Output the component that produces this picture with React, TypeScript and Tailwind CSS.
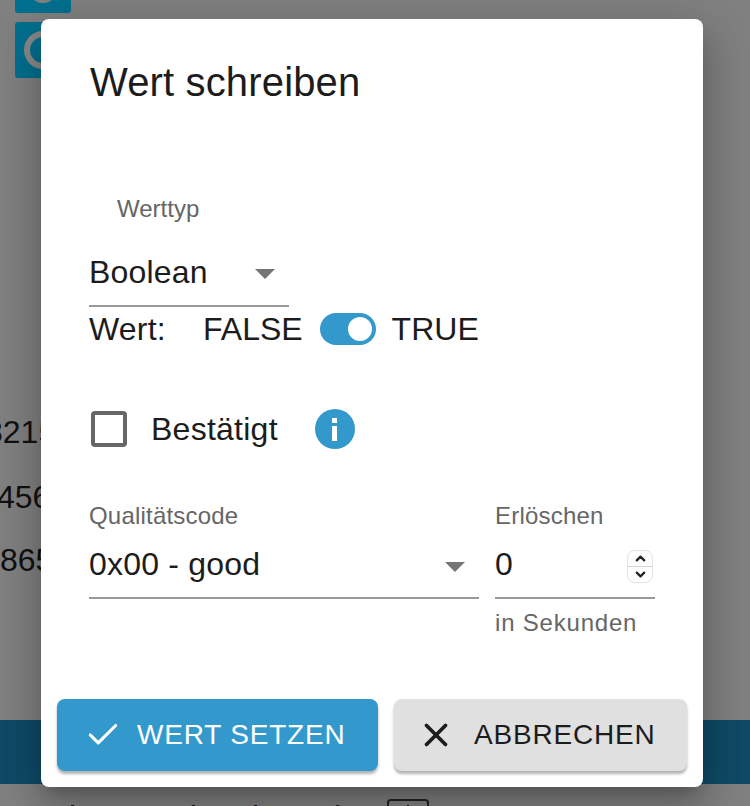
import React from 'react';
import { Check, X, ChevronUp, ChevronDown } from 'lucide-react';

const font = "font-['Liberation_Sans',Arial,sans-serif]";

function Caret() {
  return <div className="w-0 h-0 border-x-[10px] border-x-transparent border-t-[10px] border-t-[#757575]" />;
}

function Background() {
  return (
    <div className="h-[806px] overflow-hidden bg-[#808080]">
      <div className="flex flex-col gap-[9px] pl-[15px] -mt-[43px]">
        <div className="w-[56px] h-[56px] rounded-[3px] bg-[#00708f] flex items-end justify-center pb-[10px]">
          <div className="w-[22px] h-[9px] rounded-b-full bg-[#808080]" />
        </div>
        <div className="w-[56px] h-[56px] rounded-[3px] bg-[#00708f] flex items-center pl-[9px]">
          <div className="w-[38px] h-[38px] rounded-full border-[6px] border-[#8a8a8a]" />
        </div>
      </div>
      <div className="mt-[338px] flex flex-col text-[32px] leading-[33px] text-[#111] whitespace-nowrap">
        <div className="-ml-[15px]">8215</div>
        <div className="-ml-[3px] mt-[32px]">456</div>
        <div className="mt-[30px]">865</div>
      </div>
      <div className="mt-[143px] h-[64px] bg-[#0f4a66]" />
      <div className="mt-[15px] flex items-start text-[32px] leading-[36px] text-[#111] whitespace-nowrap">
        <span className="w-[391px] -ml-[4px] shrink-0">407Zimmer Uhrzeit 1: Bl</span>
        <div className="w-[42px] h-[20px] rounded-[4px] border-2 border-[#222] flex justify-center">
          <div className="w-[2px] h-[16px] bg-[#222] mt-[4px]" />
        </div>
      </div>
    </div>
  );
}

export default function App() {
  return (
    <div className={`relative h-[806px] w-[750px] overflow-hidden ${font}`}>
      <Background />
      <div className="absolute left-[41px] top-[19px] w-[662px] h-[768px] rounded-[8px] bg-white text-[#1c1c1c] shadow-[0_11px_15px_-7px_rgba(0,0,0,0.2),0_24px_38px_3px_rgba(0,0,0,0.14),0_9px_46px_8px_rgba(0,0,0,0.12)] flex flex-col">
        <h2 className="pl-[49px] pt-[40px] text-[40px] leading-[46px] tracking-[0.15px]">Wert schreiben</h2>

        <div className="pl-[48px] pr-[48px] mt-[92px]">
          <div className="pl-[28px] text-[24px] leading-[24px] text-[#666]">Werttyp</div>
          <div className="mt-[31px] w-[200px] h-[55px] border-b-2 border-[#999] flex items-start justify-between pr-[14px]">
            <span className="text-[32px] leading-[40px] tracking-[0.2px]">Boolean</span>
            <div className="mt-[17px]"><Caret /></div>
          </div>
          <div className="mt-[2px] flex items-center text-[32px] leading-[40px]">
            <span className="w-[114px] tracking-[0.2px]">Wert:</span>
            <span>FALSE</span>
            <div className="ml-[17px] mr-[16px] w-[56px] h-[32px] rounded-full bg-[#3399cc] flex items-center justify-end pr-[4px]">
              <div className="w-[24px] h-[24px] rounded-full bg-white" />
            </div>
            <span>TRUE</span>
          </div>

          <div className="mt-[60px] flex items-center">
            <div className="ml-[2px] w-[36px] h-[36px] rounded-[4px] border-[4px] border-[#666]" />
            <span className="ml-[24px] text-[32px] leading-[40px] tracking-[0.25px]">Bestätigt</span>
            <div className="ml-[37px] w-[40px] h-[40px] rounded-full bg-[#3399cc] flex flex-col items-center justify-center gap-[3px]">
              <div className="w-[5px] h-[5px] bg-white" />
              <div className="w-[5px] h-[15px] bg-white" />
            </div>
          </div>

          <div className="mt-[53px] flex">
            <div className="w-[390px]">
              <div className="text-[24px] leading-[28px] tracking-[0.2px] text-[#666]">Qualitätscode</div>
              <div className="mt-[12px] h-[57px] border-b-2 border-[#999] flex items-start justify-between pr-[14px]">
                <span className="text-[32px] leading-[44px] tracking-[0.2px]">0x00 - good</span>
                <div className="mt-[20px]"><Caret /></div>
              </div>
            </div>
            <div className="ml-[16px] w-[160px]">
              <div className="text-[24px] leading-[28px] tracking-[0.2px] text-[#666]">Erlöschen</div>
              <div className="mt-[12px] h-[57px] border-b-2 border-[#999] flex items-start justify-between pr-[2px]">
                <span className="text-[32px] leading-[44px]">0</span>
                <div className="mt-[8px] w-[26px] h-[33px] rounded-[8px] border border-[#e2e2e2] flex flex-col items-center text-[#222] overflow-hidden">
                  <div className="h-[16px] w-full border-b border-[#d4d4d4] flex items-center justify-center">
                    <ChevronUp size={15} strokeWidth={3.5} />
                  </div>
                  <div className="h-[15px] w-full flex items-center justify-center">
                    <ChevronDown size={15} strokeWidth={3.5} />
                  </div>
                </div>
              </div>
              <div className="mt-[10px] text-[24px] leading-[28px] tracking-[0.8px] text-[#666]">in Sekunden</div>
            </div>
          </div>
        </div>

        <div className="mt-auto mb-[16px] px-[16px] flex gap-[16px]">
          <button className="w-[321px] h-[72px] rounded-[8px] bg-[#3399cc] text-white shadow-[0_3px_3px_rgba(0,0,0,0.3)] flex items-center pl-[27px] text-[28px] tracking-[0.8px]">
            <Check size={38} strokeWidth={2} />
            <span className="ml-[15px]">WERT SETZEN</span>
          </button>
          <button className="w-[293px] h-[72px] rounded-[8px] bg-[#e0e0e0] text-[#1c1c1c] shadow-[0_3px_3px_rgba(0,0,0,0.3)] flex items-center pl-[23px] text-[28px] tracking-[0.8px]">
            <X size={38} strokeWidth={2.3} />
            <span className="ml-[19px]">ABBRECHEN</span>
          </button>
        </div>
      </div>
    </div>
  );
}
